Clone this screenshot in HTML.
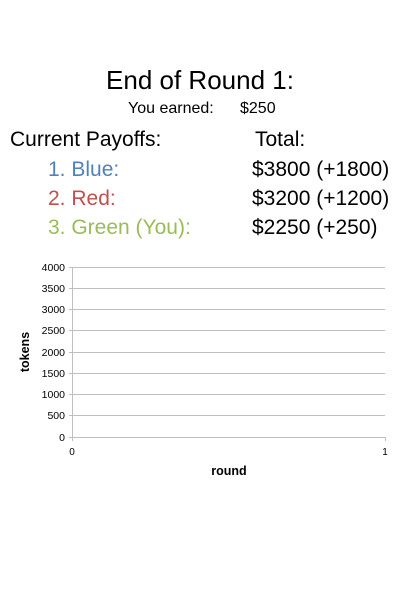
<!DOCTYPE html>
<html><head><style>
body{margin:0;width:400px;height:600px;background:#fff;position:relative;font-family:"Liberation Sans",sans-serif;overflow:hidden}
.t{position:absolute;white-space:nowrap;line-height:1}
</style></head><body>
<div class="t" style="left:0;width:400px;text-align:center;top:67px;font-size:26px;color:#000">End of Round 1:</div>
<div class="t" style="left:128px;top:101px;font-size:16px;color:#000">You earned:</div>
<div class="t" style="left:240px;top:101px;font-size:16px;color:#000">$250</div>
<div class="t" style="left:10px;top:129px;font-size:21px;color:#000">Current Payoffs:</div>
<div class="t" style="left:255px;top:129px;font-size:21px;color:#000">Total:</div>
<div class="t" style="left:48px;top:159px;font-size:21px;color:#4f81bd">1. Blue:</div>
<div class="t" style="left:252px;top:159px;font-size:21px;color:#000">$3800 (+1800)</div>
<div class="t" style="left:48px;top:188px;font-size:21px;color:#c0504d">2. Red:</div>
<div class="t" style="left:252px;top:188px;font-size:21px;color:#000">$3200 (+1200)</div>
<div class="t" style="left:48px;top:217px;font-size:21px;color:#9bbb59">3. Green (You):</div>
<div class="t" style="left:252px;top:217px;font-size:21px;color:#000">$2250 (+250)</div>
<svg width="400" height="600" style="position:absolute;left:0;top:0" font-family="Liberation Sans, sans-serif">
<g stroke="#bfbfbf" stroke-width="1">
<line x1="72" x2="385" y1="267.5" y2="267.5"/>
<line x1="72" x2="385" y1="288.5" y2="288.5"/>
<line x1="72" x2="385" y1="309.5" y2="309.5"/>
<line x1="72" x2="385" y1="330.5" y2="330.5"/>
<line x1="72" x2="385" y1="352.5" y2="352.5"/>
<line x1="72" x2="385" y1="373.5" y2="373.5"/>
<line x1="72" x2="385" y1="394.5" y2="394.5"/>
<line x1="72" x2="385" y1="415.5" y2="415.5"/>
<line x1="72" x2="385" y1="437.5" y2="437.5"/>
<line x1="72.5" x2="72.5" y1="267" y2="441"/>
<line x1="385.5" x2="385.5" y1="437" y2="441"/>
<line x1="69" x2="72" y1="267.5" y2="267.5"/>
<line x1="69" x2="72" y1="288.5" y2="288.5"/>
<line x1="69" x2="72" y1="309.5" y2="309.5"/>
<line x1="69" x2="72" y1="330.5" y2="330.5"/>
<line x1="69" x2="72" y1="352.5" y2="352.5"/>
<line x1="69" x2="72" y1="373.5" y2="373.5"/>
<line x1="69" x2="72" y1="394.5" y2="394.5"/>
<line x1="69" x2="72" y1="415.5" y2="415.5"/>
<line x1="69" x2="72" y1="437.5" y2="437.5"/>
</g>
<g font-size="10.5" fill="#000" text-anchor="end">
<text x="65" y="271">4000</text>
<text x="65" y="292">3500</text>
<text x="65" y="313">3000</text>
<text x="65" y="334">2500</text>
<text x="65" y="356">2000</text>
<text x="65" y="377">1500</text>
<text x="65" y="398">1000</text>
<text x="65" y="419">500</text>
<text x="65" y="441">0</text>
</g>
<text x="72" y="455" font-size="10" text-anchor="middle">0</text>
<text x="385" y="455" font-size="10" text-anchor="middle">1</text>
<text x="229" y="475" font-size="12.5" font-weight="bold" text-anchor="middle">round</text>
<text transform="translate(29,352) rotate(-90)" font-size="12.5" font-weight="bold" text-anchor="middle">tokens</text>
</svg>
</body></html>
